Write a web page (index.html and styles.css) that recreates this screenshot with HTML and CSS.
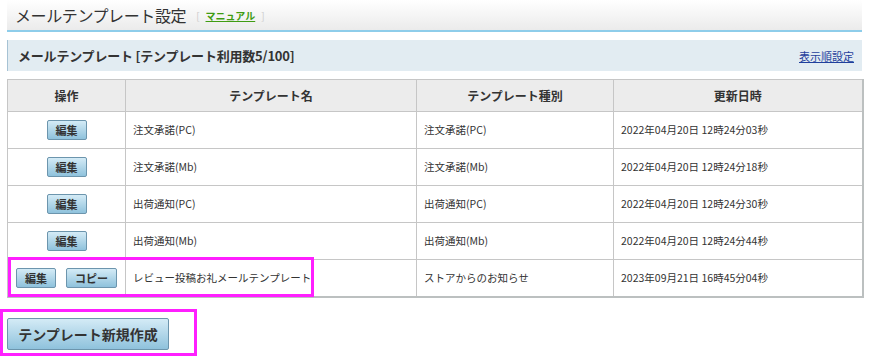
FILE: index.html
```html
<!DOCTYPE html>
<html lang="ja">
<head>
    <meta charset="UTF-8">
    <meta name="viewport" content="width=device-width, initial-scale=1.0">
    <title>メールテンプレート設定</title>
    <link rel="stylesheet" href="styles.css">
</head>
<body>
    <div class="page">
        <div class="head">
            <h1 class="title">メールテンプレート設定</h1>
            <span class="manual"><span class="bracket">[</span><a href="#">マニュアル</a><span class="bracket">]</span></span>
        </div>

        <div class="sub">
            <h2 class="sub-title">メールテンプレート [テンプレート利用数5/100]</h2>
            <a class="sort-link" href="#">表示順設定</a>
        </div>

        <div class="list">
            <table class="grid">
                <colgroup>
                    <col class="c-op">
                    <col class="c-name">
                    <col class="c-type">
                    <col class="c-date">
                </colgroup>
                <thead>
                    <tr>
                        <th>操作</th>
                        <th>テンプレート名</th>
                        <th>テンプレート種別</th>
                        <th>更新日時</th>
                    </tr>
                </thead>
                <tbody>
                    <tr>
                        <td class="ops"><button class="btn">編集</button></td>
                        <td>注文承諾(PC)</td>
                        <td>注文承諾(PC)</td>
                        <td>2022年04月20日 12時24分03秒</td>
                    </tr>
                    <tr>
                        <td class="ops"><button class="btn">編集</button></td>
                        <td>注文承諾(Mb)</td>
                        <td>注文承諾(Mb)</td>
                        <td>2022年04月20日 12時24分18秒</td>
                    </tr>
                    <tr>
                        <td class="ops"><button class="btn">編集</button></td>
                        <td>出荷通知(PC)</td>
                        <td>出荷通知(PC)</td>
                        <td>2022年04月20日 12時24分30秒</td>
                    </tr>
                    <tr>
                        <td class="ops"><button class="btn">編集</button></td>
                        <td>出荷通知(Mb)</td>
                        <td>出荷通知(Mb)</td>
                        <td>2022年04月20日 12時24分44秒</td>
                    </tr>
                    <tr>
                        <td class="ops ops-two"><button class="btn">編集</button><button class="btn">コピー</button></td>
                        <td>レビュー投稿お礼メールテンプレート</td>
                        <td>ストアからのお知らせ</td>
                        <td>2023年09月21日 16時45分04秒</td>
                    </tr>
                </tbody>
            </table>
            <div class="mark mark-row"></div>
        </div>

        <div class="new-box">
            <button class="btn btn-big">テンプレート新規作成</button>
        </div>
    </div>
</body>
</html>
```

FILE: styles.css
```css
body {
    margin: 0;
    font-family: "Noto Sans CJK JP", "Liberation Sans", sans-serif;
    color: #333;
    background: #fff;
}

.page {
    width: 855px;
    padding-left: 7px;
}

/* page heading */
.head {
    display: flex;
    align-items: center;
    height: 30px;
    padding-left: 8px;
    background: linear-gradient(#ffffff, #ebebeb);
    border-bottom: 2px solid #8ecdea;
}

.title {
    margin: 0;
    font-size: 16px;
    font-weight: normal;
    letter-spacing: -0.4px;
    color: #333;
}

.manual {
    margin-left: 10px;
    font-size: 10px;
    font-weight: bold;
}

.manual a {
    color: #3f9c12;
    margin: 0 6px;
}

.bracket {
    color: #ccc;
    font-weight: normal;
}

/* sub heading */
.sub {
    display: flex;
    justify-content: space-between;
    align-items: center;
    height: 31px;
    margin-top: 8px;
    padding: 0 8px 0 10px;
    background: #e2ecf2;
    border-left: 1px solid #a6c2d4;
}

.sub-title {
    margin: 0;
    font-size: 13px;
    font-weight: bold;
    letter-spacing: -0.2px;
    color: #333;
}

.sort-link {
    font-size: 11px;
    color: #1f3f9c;
}

/* list */
.list {
    position: relative;
    margin-top: 8px;
}

.grid {
    width: 855px;
    border-collapse: collapse;
    table-layout: fixed;
    border-right: 2px solid #bcc0c0;
    border-bottom: 2px solid #bcc0c0;
}

.c-op { width: 118px; }
.c-name { width: 291px; }
.c-type { width: 197px; }
.c-date { width: 249px; }

.grid th,
.grid td {
    border: 1px solid #c6c6c6;
}

.grid th {
    height: 31px;
    padding: 0;
    background: #ececec;
    font-size: 12px;
    font-weight: bold;
    color: #333;
}

.grid td {
    height: 34px;
    padding: 0 0 2px 7px;
    font-size: 10.5px;
    color: #333;
}

.grid td.ops {
    padding: 0;
    text-align: center;
}

.grid td.ops-two {
    text-align: left;
    padding-left: 8px;
}

.ops-two .btn + .btn {
    margin-left: 10px;
}

.btn {
    height: 20px;
    padding: 0 8px;
    font-family: inherit;
    font-size: 11px;
    font-weight: bold;
    color: #333;
    background: linear-gradient(#d4ebf6, #8fc2dc);
    border: 1px solid #6c95ad;
    border-radius: 2px;
    cursor: pointer;
}

/* highlight marks */
.mark {
    position: absolute;
    border: 3px solid #ff1fff;
}

.mark-row {
    left: 1px;
    top: 178px;
    width: 300px;
    height: 34px;
}

.new-box {
    display: inline-block;
    margin: 11px 0 0 -7px;
    padding: 6px 25px 3px 4px;
    border: 3px solid #ff1fff;
}

.btn-big {
    display: block;
    width: 162px;
    height: 32px;
    font-size: 14px;
}
```
